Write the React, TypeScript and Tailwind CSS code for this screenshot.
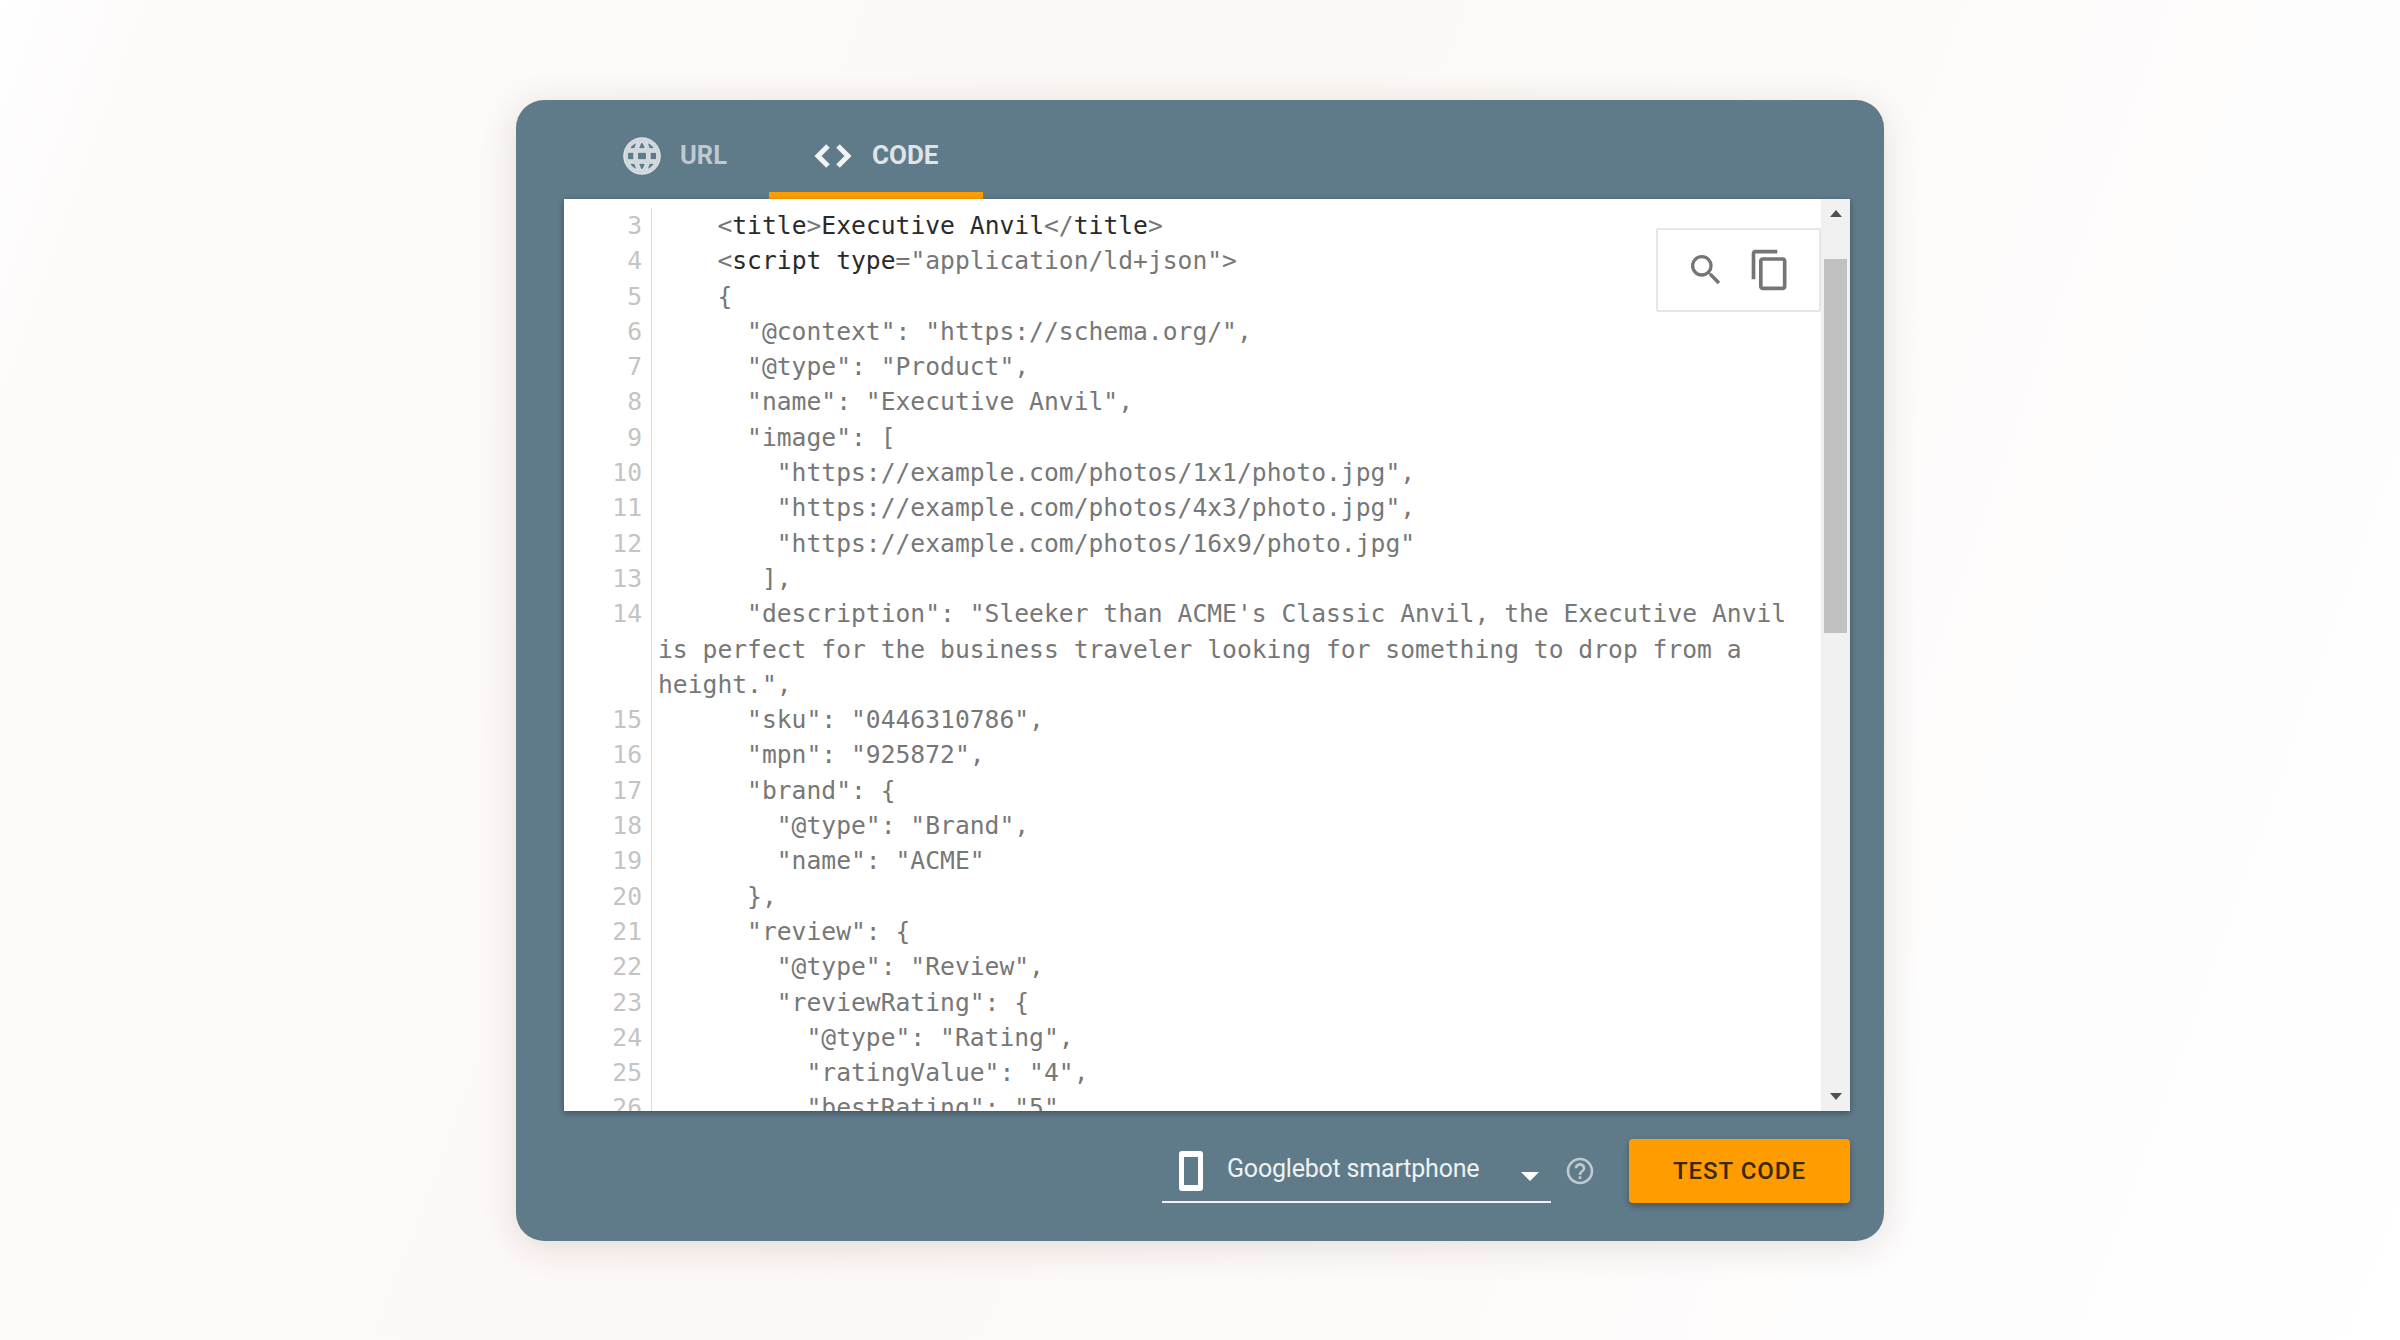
import React from "react";

type Piece = { t: string; dark?: boolean };
type Line = { n: number; code: Piece[] | string };

const lines: Line[] = [
  {
    n: 3,
    code: [
      { t: "    <" },
      { t: "title", dark: true },
      { t: ">" },
      { t: "Executive Anvil", dark: true },
      { t: "</" },
      { t: "title", dark: true },
      { t: ">" },
    ],
  },
  {
    n: 4,
    code: [
      { t: "    <" },
      { t: "script type", dark: true },
      { t: '="application/ld+json">' },
    ],
  },
  { n: 5, code: "    {" },
  { n: 6, code: '      "@context": "https://schema.org/",' },
  { n: 7, code: '      "@type": "Product",' },
  { n: 8, code: '      "name": "Executive Anvil",' },
  { n: 9, code: '      "image": [' },
  { n: 10, code: '        "https://example.com/photos/1x1/photo.jpg",' },
  { n: 11, code: '        "https://example.com/photos/4x3/photo.jpg",' },
  { n: 12, code: '        "https://example.com/photos/16x9/photo.jpg"' },
  { n: 13, code: "       ]," },
  {
    n: 14,
    code: '      "description": "Sleeker than ACME\'s Classic Anvil, the Executive Anvil is perfect for the business traveler looking for something to drop from a height.",',
  },
  { n: 15, code: '      "sku": "0446310786",' },
  { n: 16, code: '      "mpn": "925872",' },
  { n: 17, code: '      "brand": {' },
  { n: 18, code: '        "@type": "Brand",' },
  { n: 19, code: '        "name": "ACME"' },
  { n: 20, code: "      }," },
  { n: 21, code: '      "review": {' },
  { n: 22, code: '        "@type": "Review",' },
  { n: 23, code: '        "reviewRating": {' },
  { n: 24, code: '          "@type": "Rating",' },
  { n: 25, code: '          "ratingValue": "4",' },
  { n: 26, code: '          "bestRating": "5"' },
];

function Globe() {
  return (
    <svg viewBox="0 0 24 24" className="w-[44px] h-[44px] fill-white/70" stroke="white" strokeOpacity="0.7" strokeWidth="0.5">
      <path d="M11.99 2C6.47 2 2 6.48 2 12s4.47 10 9.99 10C17.52 22 22 17.52 22 12S17.52 2 11.99 2zm6.93 6h-2.95a15.65 15.65 0 0 0-1.38-3.56A8.03 8.03 0 0 1 18.92 8zM12 4.04c.83 1.2 1.48 2.53 1.91 3.96h-3.82c.43-1.43 1.08-2.76 1.91-3.96zM4.26 14C4.1 13.36 4 12.69 4 12s.1-1.36.26-2h3.38c-.08.66-.14 1.32-.14 2s.06 1.34.14 2H4.26zm.82 2h2.95c.32 1.25.78 2.45 1.38 3.56A7.987 7.987 0 0 1 5.08 16zm2.95-8H5.08a7.987 7.987 0 0 1 4.33-3.56A15.65 15.65 0 0 0 8.03 8zM12 19.96c-.83-1.2-1.48-2.53-1.91-3.96h3.82c-.43 1.43-1.08 2.76-1.91 3.96zM14.34 14H9.66c-.09-.66-.16-1.32-.16-2s.07-1.35.16-2h4.68c.09.65.16 1.32.16 2s-.07 1.34-.16 2zm.25 5.56c.6-1.11 1.06-2.31 1.38-3.56h2.95a8.03 8.03 0 0 1-4.33 3.56zM16.36 14c.08-.66.14-1.32.14-2s-.06-1.34-.14-2h3.38c.16.64.26 1.31.26 2s-.1 1.36-.26 2h-3.38z" />
    </svg>
  );
}

function CodeIcon() {
  return (
    <svg viewBox="0 0 38 24" className="w-[38px] h-[24px]" fill="none" stroke="white" strokeOpacity="0.92" strokeWidth="5">
      <path d="M14 2 L4 12 L14 22" />
      <path d="M24 2 L34 12 L24 22" />
    </svg>
  );
}

export default function App() {
  return (
    <div className="w-[2400px] h-[1340px] bg-[linear-gradient(110deg,#ffffff_0%,#fdfafa_5%,#fcf8f5_45%,#fdfbfa_68%,#fefdfd_85%,#ffffff_100%)] flex items-start justify-center pt-[100px] font-['Roboto',sans-serif]">
      <div className="w-[1368px] h-[1141px] rounded-[28px] bg-[#5f7a89] pl-[48px] pr-[34px] flex flex-col shadow-[0_6px_36px_rgba(70,40,30,0.14)]">
        {/* tabs */}
        <div className="h-[99px] shrink-0 flex pl-[56px]">
          <div className="w-[149px] flex items-center gap-[16px] pt-[12px]">
            <Globe />
            <span className="text-[25.5px] font-bold text-white/60">URL</span>
          </div>
          <div className="w-[214px] h-[99px] flex items-center gap-[20px] pl-[45px] pt-[19px] border-b-[7px] border-[#ff9d00]">
            <CodeIcon />
            <span className="text-[26px] font-bold text-white/80">CODE</span>
          </div>
        </div>

        {/* editor */}
        <div className="relative h-[912px] shrink-0 bg-white overflow-hidden flex shadow-[0_2px_6px_rgba(0,0,0,0.35)]">
          <div className="flex-1 min-w-0 pt-[9px] font-['DejaVu_Sans_Mono',monospace] text-[24.66px] leading-[35.3px] text-[#777777]">
            {lines.map((line) => (
              <div key={line.n} className="flex">
                <div className="w-[88px] shrink-0 border-r border-[#dcdcdc] pr-[9px] text-right text-[#c4c4c4]">{line.n}</div>
                <div className="flex-1 min-w-0 pl-[6px] pr-[20px] whitespace-pre-wrap">
                  {typeof line.code === "string"
                    ? line.code
                    : line.code.map((p, i) => (
                        <span key={i} className={p.dark ? "text-[#2a2a2a]" : ""}>
                          {p.t}
                        </span>
                      ))}
                </div>
              </div>
            ))}
          </div>

          {/* scrollbar */}
          <div className="w-[29px] shrink-0 bg-[#f1f1f1] flex flex-col items-center px-[3px]">
            <div className="h-[28px] w-full flex items-center justify-center">
              <div className="w-0 h-0 border-x-[6px] border-x-transparent border-b-[7px] border-b-[#505050]" />
            </div>
            <div className="h-[374px] w-full bg-[#c1c1c1] mt-[32px]" />
            <div className="flex-1" />
            <div className="h-[29px] w-full flex items-center justify-center pb-[1px]">
              <div className="w-0 h-0 border-x-[6px] border-x-transparent border-t-[7px] border-t-[#505050]" />
            </div>
          </div>

          {/* floating tools */}
          <div className="absolute right-[29px] top-[29px] w-[165px] h-[84px] bg-white border-2 border-[#e6e6e6] rounded-[2px] flex items-center gap-[22px] pl-[28px]">
            <svg viewBox="0 0 24 24" className="w-[40px] h-[40px] fill-[#757575]">
              <path d="M15.5 14h-.79l-.28-.27A6.471 6.471 0 0 0 16 9.5 6.5 6.5 0 1 0 9.5 16c1.61 0 3.09-.59 4.23-1.57l.27.28v.79l5 4.99L20.49 19l-4.99-5zm-6 0C7.01 14 5 11.99 5 9.5S7.01 5 9.5 5 14 7.01 14 9.5 11.99 14 9.5 14z" />
            </svg>
            <svg viewBox="0 0 24 24" className="w-[44px] h-[44px] fill-[#757575]">
              <path d="M16 1H4c-1.1 0-2 .9-2 2v14h2V3h12V1zm3 4H8c-1.1 0-2 .9-2 2v14c0 1.1.9 2 2 2h11c1.1 0 2-.9 2-2V7c0-1.1-.9-2-2-2zm0 16H8V7h11v14z" />
            </svg>
          </div>
        </div>

        {/* bottom bar */}
        <div className="flex-1 flex justify-end pt-[28px]">
          <div className="w-[389px] h-[64px] border-b-2 border-[#f2f2f2] flex items-start pl-[16px] relative">
            <svg viewBox="0 0 26 40" className="w-[26px] h-[40px] mt-[12px] fill-white">
              <path d="M4 0h18a3 3 0 0 1 3 3v34a3 3 0 0 1-3 3H4a3 3 0 0 1-3-3V3a3 3 0 0 1 3-3zm2 6v28h14V6H6z" />
            </svg>
            <span className="ml-[23px] mt-[10px] text-[25px] leading-[40px] text-white/90 tracking-[-0.2px]">Googlebot smartphone</span>
            <div className="absolute right-[12px] top-[33px] w-0 h-0 border-x-[9px] border-x-transparent border-t-[9px] border-t-white" />
          </div>
          <div className="ml-[13px] mr-[33px] h-[64px] flex items-center">
            <svg viewBox="0 0 24 24" className="w-[32px] h-[32px] fill-white/60">
              <path d="M11 18h2v-2h-2v2zm1-16C6.48 2 2 6.48 2 12s4.48 10 10 10 10-4.48 10-10S17.52 2 12 2zm0 18c-4.41 0-8-3.59-8-8s3.59-8 8-8 8 3.59 8 8-3.59 8-8 8zm0-14c-2.21 0-4 1.79-4 4h2c0-1.1.9-2 2-2s2 .9 2 2c0 2-3 1.75-3 5h2c0-2.25 3-2.5 3-5 0-2.21-1.79-4-4-4z" />
            </svg>
          </div>
          <button className="w-[221px] h-[64px] bg-[#ff9d00] rounded-[4px] text-[24px] font-medium tracking-[1px] text-[#3a2800] shadow-[0_3px_6px_rgba(0,0,0,0.3)]">
            TEST CODE
          </button>
        </div>
      </div>
    </div>
  );
}
